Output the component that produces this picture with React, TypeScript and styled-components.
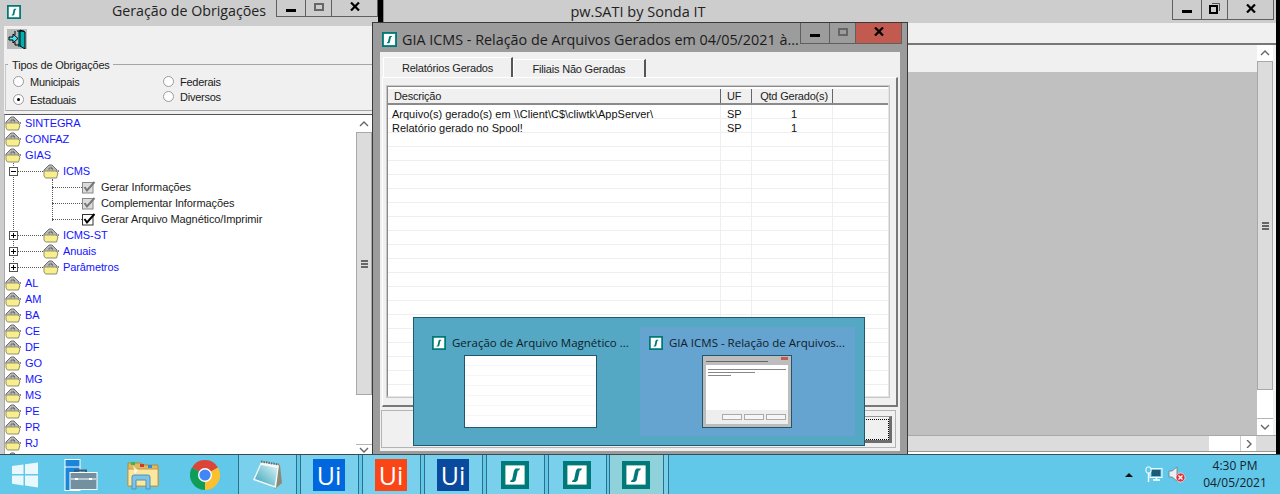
import React from "react";
import styled, { createGlobalStyle } from "styled-components";

const Global = createGlobalStyle`
  html, body { margin: 0; padding: 0; background: #000; overflow: hidden; }
  #root { width: 1280px; height: 494px; }
  * { box-sizing: border-box; }
`;

const uiFont = `"Liberation Sans", Arial, sans-serif`;
const titleFont = `"Open Sans", "Noto Sans", sans-serif`;

const Screen = styled.div`
  width: 1280px; height: 494px; display: flex; flex-direction: column; overflow: hidden;
  font-family: ${uiFont}; font-size: 11px; color: #111;
`;
const Desktop = styled.div`
  position: relative; height: 454px; background: #000; overflow: hidden;
`;
const Win = styled.div<{ $x: number; $w: number }>`
  position: absolute; left: ${p => p.$x}px; top: 0; width: ${p => p.$w}px; height: 454px;
  background: #cdcdcd; display: flex; flex-direction: column;
`;

/* caption buttons */
const Caption = styled.div<{ $top: number; $h: number; $right: number }>`
  position: absolute; right: ${p => p.$right}px; top: ${p => p.$top}px; height: ${p => p.$h}px; display: flex;
  border: 1px solid #5f5f5f; border-top: none;
`;
const CapBtn = styled.div<{ $w: number; $red?: boolean; $sep?: boolean }>`
  width: ${p => p.$w}px; display: flex; align-items: center; justify-content: center;
  background: ${p => (p.$red ? "#c25a50" : "transparent")};
  border-left: ${p => (p.$sep ? "1px solid #5f5f5f" : "none")};
`;
const MinBar = styled.span`display: block; width: 10px; height: 3px; background: #000; margin-top: 4px;`;
const MaxBox = styled.span`display: block; width: 10px; height: 8px; border: 2px solid #666; margin-top: -3px;`;

const CloseX = () => (
  <svg width="10" height="9" viewBox="0 0 10 9" style={{ marginTop: -3 }}>
    <path d="M1 0.5L9 8.5M9 0.5L1 8.5" stroke="#000" strokeWidth="2.2" />
  </svg>
);
const Restore = () => (
  <svg width="11" height="11" viewBox="0 0 11 11" style={{ marginTop: -3 }}>
    <path d="M3 .5H10.5V8" fill="none" stroke="#555" />
    <rect x="1" y="3" width="7" height="7" fill="none" stroke="#000" strokeWidth="2" />
  </svg>
);

const SIcon = ({ size = 14, stroke = 2 }: { size?: number; stroke?: number }) => (
  <svg width={size} height={size} viewBox="0 0 28 28" style={{ flex: "none", display: "block" }}>
    <rect x={stroke * 1.1} y={stroke * 1.1} width={28 - stroke * 2.2} height={28 - stroke * 2.2} fill="#fff" stroke="#007a78" strokeWidth={stroke * 2.2} />
    <path d="M14.5 7.5H19L18 9.5H16.8L14.6 19.5L12.8 21H8.8L10 18.8H11L13 9.5Z" fill="#007a78" />
  </svg>
);

/* left window */
const LeftTitle = styled.div`
  height: 26px; flex: none; display: flex; align-items: center; padding: 0 0 2px 7px; position: relative;
`;
const LeftTitleText = styled.div`
  position: absolute; left: 112px; top: 1px; font: 400 14.2px/20px ${titleFont}; color: #222; white-space: nowrap;
`;
const LeftBody = styled.div`
  flex: 1; min-height: 0; margin-left: 4px; margin-right: 6px; background: #f0f0f0; display: flex; flex-direction: column;
`;
const Toolbar = styled.div`
  height: 34px; flex: none; padding: 3px 0 0 3px;
`;
const ExitBtn = styled.div`
  width: 20px; height: 20px; background: #b9b9b9; display: flex; align-items: center; justify-content: center;
`;
const Group = styled.div`
  margin: 4px 0 0 1px; height: 47px; flex: none; border-top: 1px solid #a5a5a5; border-left: 1px solid #c8c8c8;
  border-bottom: 1px solid #a5a5a5; position: relative; display: grid; grid-template-columns: 150px 1fr;
`;
const GroupLegend = styled.div`
  position: absolute; left: 2px; top: -6px; background: #f0f0f0; padding: 0 3px 0 4px; line-height: 13px; font-size: 11px; letter-spacing: -0.18px; color: #222;
`;
const RadioCol = styled.div<{ $gap: number }>`
  display: flex; flex-direction: column; gap: ${p => p.$gap}px; padding: 10px 0 0 7px;
`;
const RadioRow = styled.div`
  display: flex; align-items: center; gap: 6px; height: 13px; font-size: 11px; letter-spacing: -0.25px; color: #1a1a1a;
`;
const RadioDot = styled.span<{ $on?: boolean }>`
  width: 11px; height: 11px; border-radius: 50%; border: 1px solid #9a9a9a; background: #fff; flex: none;
  display: flex; align-items: center; justify-content: center;
  &::after { content: ""; width: 3px; height: 3px; border-radius: 50%; background: ${p => (p.$on ? "#000" : "transparent")}; }
`;
const TreeBox = styled.div`
  margin-top: 3px; flex: 1; min-height: 0; border-top: 1px solid #555; border-left: 1px solid #a8a8a8; background: #fff; display: flex; position: relative;
`;
const TreeList = styled.div`
  flex: 1; min-width: 0; overflow: hidden; position: relative;
`;
const Row = styled.div<{ $lvl: number }>`
  height: 16px; display: flex; align-items: center; padding-left: ${p => (p.$lvl === 0 ? 0 : p.$lvl === 1 ? 4 : 47)}px;
`;
const Label = styled.span<{ $blue?: boolean; $ml: number }>`
  margin-left: ${p => p.$ml}px; color: ${p => (p.$blue ? "#1414ff" : "#222")}; font-size: 11px; letter-spacing: -0.1px; white-space: nowrap;
`;
const Expander = styled.span`
  width: 9px; height: 9px; border: 1px solid #555; background: #fff; position: relative; flex: none;
  &::before { content: ""; position: absolute; left: 1px; right: 1px; top: 3px; height: 1px; background: #000; }
`;
const ExpanderPlus = styled(Expander)`
  &::after { content: ""; position: absolute; top: 1px; bottom: 1px; left: 3px; width: 1px; background: #000; }
`;
const HDots = styled.span<{ $w: number }>`
  width: ${p => p.$w}px; height: 0; border-top: 1px dotted #555; flex: none;
`;
const VGuide = styled.span<{ $x: number; $y: number; $h: number }>`
  position: absolute; left: ${p => p.$x}px; top: ${p => p.$y}px; height: ${p => p.$h}px; width: 0; border-left: 1px dotted #555;
`;
const VScroll = styled.div`
  width: 16px; flex: none; display: flex; flex-direction: column; background: #fff;
`;
const ArrowBtn = styled.div<{ $h: number }>`
  height: ${p => p.$h}px; flex: none; background: #fff; display: flex; align-items: center; justify-content: center;
`;
const Thumb = styled.div<{ $h: number }>`
  height: ${p => p.$h}px; flex: none; background: #dcdcdc; border: 1px solid #a8a8a8;
  display: flex; align-items: center; justify-content: center;
`;
const Track = styled.div`flex: 1; background: #fff; border-bottom: 1px solid #b5b5b5;`;
const Grip = styled.span`
  width: 7px; height: 8px; background: repeating-linear-gradient(#666 0 2px, transparent 2px 3px);
`;

const Chevron = ({ dir }: { dir: "up" | "down" | "right" }) => {
  const d = dir === "up" ? "M1 6L5 2L9 6" : dir === "down" ? "M1 2L5 6L9 2" : "M3 0L7 4L3 8";
  return (
    <svg width="10" height="8" viewBox="0 0 10 8">
      <path d={d} fill="none" stroke="#666" strokeWidth="1.4" />
    </svg>
  );
};

const Folder = () => (
  <svg width="16" height="15" viewBox="0 0 16 15" style={{ flex: "none" }}>
    <path d="M1 6L6 1H9L14 6V8H1Z" fill="#b8b8b8" stroke="#6d6d6d" strokeWidth="1" />
    <path d="M6.5 4h1M5.5 5h1M8 4h1M9 5h1" stroke="#333" strokeWidth="1" />
    <path d="M1 7H13L15 9L13.5 14H2.5L1 12Z" fill="#f8ee8c" stroke="#8f8f70" strokeWidth="1" />
    <path d="M15 6L16 7L15 8" fill="none" stroke="#888" />
  </svg>
);

const Check = ({ on }: { on?: boolean }) => (
  <svg width="14" height="13" viewBox="0 0 14 13" style={{ flex: "none" }}>
    <rect x=".5" y="1.5" width="10.5" height="10.5" fill={on ? "#fff" : "#dcdcdc"} stroke={on ? "#333" : "#888"} />
    <path d="M2.5 6L5 9.5L12.5 1" fill="none" stroke={on ? "#000" : "#777"} strokeWidth="2" />
  </svg>
);

const ExitIcon = () => (
  <svg width="20" height="20" viewBox="0 0 20 20">
    <rect x="11" y="2" width="7" height="16" fill="#008c8c" />
    <path d="M13 1L18 3V20L13 17Z" fill="#00b0b0" stroke="#000" strokeWidth="1" />
    <path d="M10 2H17" stroke="#000" />
    <path d="M2 8H6V5L11 9.5L6 14V11H2Z" fill="#4fe0f0" stroke="#000" strokeWidth="1" />
    <path d="M8 2V6M8 13V16H12" stroke="#000" fill="none" />
  </svg>
);

type TreeItem = { t: string; l: 0 | 1 | 2; k?: "minus" | "plus"; c?: "gray" | "on" };
const tree: TreeItem[] = [
  { t: "SINTEGRA", l: 0 }, { t: "CONFAZ", l: 0 }, { t: "GIAS", l: 0 },
  { t: "ICMS", l: 1, k: "minus" },
  { t: "Gerar Informações", l: 2, c: "gray" },
  { t: "Complementar Informações", l: 2, c: "gray" },
  { t: "Gerar Arquivo Magnético/Imprimir", l: 2, c: "on" },
  { t: "ICMS-ST", l: 1, k: "plus" }, { t: "Anuais", l: 1, k: "plus" }, { t: "Parâmetros", l: 1, k: "plus" },
  ...["AL", "AM", "BA", "CE", "DF", "GO", "MG", "MS", "PE", "PR", "RJ"].map(t => ({ t, l: 0 as const })),
  { t: "", l: 0 },
];

/* main window */
const MainTitle = styled.div`
  height: 23px; flex: none; text-align: center; font: 400 14.5px/24px ${titleFont}; color: #222; padding-right: 384px; background: #cdcdcd;
  border-left: 1px solid #8a8a8a;
`;
const MenuBand = styled.div`
  height: 20px; flex: none; background: #f0f0f0; border-left: 1px solid #8a8a8a;
`;
const Rule = styled.div`height: 2px; flex: none; background: #777;`;
const MainLower = styled.div`
  flex: 1; min-height: 0; display: flex; background: #f0f0f0; padding-right: 3px;
`;
const MainPane = styled.div`flex: 1; min-width: 0; display: flex; flex-direction: column;`;
const LightBand = styled.div`height: 27px; flex: none; background: #f0f0f0;`;
const GrayArea = styled.div`flex: 1; background: #c0c0c0;`;
const HScrollRow = styled.div`
  height: 19px; flex: none; display: flex; border-top: 1px solid #a8a8a8; background: linear-gradient(#dcdcdc 0 15px, #999 15px 16px, #fff 16px);
`;
const HTrack = styled.div`width: 826px; flex: none;`;
const HThumb = styled.div`width: 31px; flex: none; background: #fff; height: 15px;`;
const HArrow = styled.div`width: 16px; flex: none; background: #fff; border-left: 1px solid #ccc; height: 15px; display: flex; align-items: center; justify-content: center;`;

/* dialog */
const DialogFrame = styled.div`
  position: absolute; left: 372px; top: 22px; width: 536px; height: 432px; background: #9c9c9c;
  border: 1px solid #3a3a3a; border-bottom: none; padding: 0 7px 3px 7px; display: flex; flex-direction: column;
`;
const DialogTitle = styled.div`
  height: 29px; flex: none; display: flex; align-items: center; gap: 5px; padding: 4px 0 0 2px;
  font: 400 14.37px/20px ${titleFont}; color: #1b1b1b; white-space: nowrap;
`;
const DialogClient = styled.div`
  flex: 1; min-height: 0; background: #f0f0f0; padding: 5px 2px 3px 2px; display: flex; flex-direction: column;
`;
const Tabs = styled.div`display: flex; align-items: flex-end; height: 20px; flex: none; padding-left: 1px;`;
const Tab = styled.div<{ $on?: boolean; $w: number }>`
  width: ${p => p.$w}px; height: ${p => (p.$on ? 20 : 18)}px; display: flex; align-items: center; justify-content: center;
  background: #f0f0f0; border-top: 1px solid #fff; border-left: 1px solid #fff; border-right: 2px solid #555;
  font-size: 11px; letter-spacing: -0.2px; color: #222; padding-top: ${p => (p.$on ? 0 : 1)}px;
`;
const TabPage = styled.div`
  height: 330px; flex: none; border-top: 1px solid #fff; border-left: 1px solid #fff; border-right: 2px solid #777; border-bottom: 2px solid #777;
  padding: 7px 6px 7px 3px; display: flex;
`;
const ListOuter = styled.div`
  flex: 1; border: 2px solid #8a8a8a; border-right-color: #e4e4e4; border-bottom-color: #e4e4e4; background: #fff; padding-top: 1px; display: flex; flex-direction: column;
  outline: 1px solid #c8c8c8; outline-offset: -1px;
`;
const ListHead = styled.div`
  height: 17px; flex: none; display: grid; grid-template-columns: 333px 31px 81px 1fr; background: #f0f0f0; border-top: 1px solid #fff; border-bottom: 2px solid #8a8a8a;
`;
const HeadCell = styled.div<{ $center?: boolean; $pad?: number }>`
  border-right: 1px solid #666; padding-left: ${p => p.$pad ?? 0}px; line-height: 14px; font-size: 11px; letter-spacing: -0.2px; color: #222; text-align: ${p => (p.$center ? "center" : "left")}; white-space: nowrap;
`;
const ListBody = styled.div`flex: 1; min-height: 0; overflow: hidden;`;
const ListRow = styled.div`
  height: 14px; display: grid; grid-template-columns: 333px 31px 81px 1fr; grid-template-rows: 13px; border-bottom: 1px solid #efefef;
`;
const Cell = styled.div<{ $center?: boolean; $pad?: number }>`
  border-right: 1px solid #efefef; padding-left: ${p => p.$pad ?? 0}px; line-height: 18px; font-size: 11px; color: #111; text-align: ${p => (p.$center ? "center" : "left")}; white-space: nowrap;
`;
const DialogFooter = styled.div`
  flex: 1; margin: 3px 2px 0 -1px; border: 1px solid #b4b4b4; display: flex; align-items: center; justify-content: flex-end; padding: 0 3px 0 0;
`;
const FocusBtn = styled.div`
  width: 90px; height: 27px; background: #f0f0f0; border: 1px solid #999; border-right: 3px solid #6d6d6d; border-bottom: 3px solid #6d6d6d; padding: 2px;
  &::after { content: ""; display: block; width: 100%; height: 100%; border: 1px dotted #000; }
`;

/* switcher */
const Switcher = styled.div`
  position: absolute; left: 413px; top: 317px; width: 452px; height: 129px; background: #54a8c4; border: 1px solid #1f5a70;
  padding: 9px; display: grid; grid-template-columns: 217px 215px;
`;
const SwitchCard = styled.div<{ $on?: boolean }>`
  background: ${p => (p.$on ? "#65a3d0" : "transparent")}; padding: 9px 0 0 9px; display: flex; flex-direction: column;
`;
const SwitchHead = styled.div`
  display: flex; align-items: center; gap: 6px; height: 14px; font: 400 11.5px/14px ${titleFont}; color: #10202a; white-space: nowrap;
`;
const ThumbFrame = styled.div<{ $w: number; $ml: number }>`
  width: ${p => p.$w}px; height: 73px; margin: 5px 0 0 ${p => p.$ml}px; border: 1px solid #23566c;
  background: repeating-linear-gradient(#fff 0 9px, #f6f6f6 9px 10px);
`;
const MiniWin = styled.div`
  width: 100%; height: 100%; background: #bdbdbd; padding: 5px 3px 3px; display: flex; flex-direction: column; position: relative;
`;
const MiniClose = styled.span`position: absolute; right: 3px; top: 1px; width: 7px; height: 3px; background: #c25a50;`;
const MiniBar = styled.div`height: 1px; background: #666; margin-bottom: 3px; width: 76%;`;
const MiniBody = styled.div`flex: 1; background: #fff; padding: 4px 2px;`;
const MiniLine = styled.div<{ $w: number }>`height: 1px; width: ${p => p.$w}%; background: #888; margin-bottom: 2px;`;
const MiniFoot = styled.div`height: 14px; background: #eee; display: flex; justify-content: flex-end; align-items: center; gap: 2px; padding-right: 2px;`;
const MiniBtn = styled.div`width: 20px; height: 6px; border: 1px solid #aaa; background: #f6f6f6;`;

/* taskbar */
const Taskbar = styled.div`
  height: 40px; flex: none; background: #62c8ea; border-top: 1px solid #3f4a50; display: flex; align-items: center;
`;
const StartSlot = styled.div`width: 50px; height: 100%; flex: none; display: flex; align-items: center; justify-content: center;`;
const Slot = styled.div<{ $open?: boolean; $active?: boolean }>`
  width: 62px; height: 100%; flex: none; display: flex; align-items: center; justify-content: center; position: relative;
  ${p => p.$open && `
    background: linear-gradient(90deg,#62c8ea 0 2px,#2c6f8a 2px 3px,#78d0ec 3px 60px,#2c6f8a 60px 61px,#62c8ea 61px);
  `}
  ${p => p.$active && `
    background: linear-gradient(90deg,#62c8ea 0 1px,#2c6f8a 1px 2px,#8fd2dc 2px 55px,#2c6f8a 55px 56px,#78d0ec 56px 60px,#2c6f8a 60px 61px,#62c8ea 61px);
    padding-right: 6px;
  `}
`;
const UiTile = styled.div<{ $c: string }>`
  width: 32px; height: 32px; background: ${p => p.$c}; color: #fff; font: 400 25px/32px "Open Sans", sans-serif; text-align: center;
`;
const Tray = styled.div`
  margin-left: auto; display: flex; align-items: center; height: 100%;
`;
const Clock = styled.div`
  width: 78px; font: 400 12px/17px ${titleFont}; color: #12222a; padding: 0 12px 2px 0; margin-left: 16px; white-space: nowrap; display: flex; flex-direction: column; align-items: center;
`;
const TrayIcons = styled.div`display: flex; align-items: center; gap: 5px;`;

const WinLogo = () => (
  <svg width="28" height="28" viewBox="0 0 28 28">
    <path d="M1 5L12.5 3.4V13H1ZM14 3.2L27 1.4V13H14ZM1 14.5H12.5V24.4L1 22.8ZM14 14.5H27V26.4L14 24.6Z" fill="#e8f8fc" />
  </svg>
);
const ServerMgr = () => (
  <svg width="34" height="32" viewBox="0 0 34 32">
    <rect x="1" y="0.5" width="15" height="31" fill="#1a86d8" stroke="#fff" />
    <path d="M1 8H16" stroke="#fff" />
    <path d="M11 14V11.5H22V14" fill="none" stroke="#3d5a70" strokeWidth="2" />
    <rect x="6" y="13.5" width="27" height="17" fill="#72909f" stroke="#fff" />
    <path d="M7 20H32" stroke="#fff" />
    <rect x="11" y="19" width="3" height="2" fill="#fff" /><rect x="25" y="19" width="3" height="2" fill="#fff" />
  </svg>
);
const Explorer = () => (
  <svg width="32" height="30" viewBox="0 0 32 30">
    <path d="M1 3H14L16 5H31V26H1Z" fill="#e0b860" stroke="#b08a3a" />
    <rect x="4" y="2" width="4" height="3" fill="#3cb54a" />
    <rect x="13" y="4" width="4" height="3" fill="#d13a2a" />
    <rect x="21" y="5" width="4" height="3" fill="#2a90d8" />
    <path d="M1 9H31V26H1Z" fill="#fbe7a0" stroke="#c09a4a" />
    <path d="M5 29V17Q5 15 7 15H21Q23 15 23 17V29H19V20H9V29Z" fill="#7fc4e4" stroke="#4a94b8" />
    <path d="M6 6L8 14L11 10Z" fill="#fff" opacity=".7" />
  </svg>
);
const Chrome = () => (
  <svg width="30" height="30" viewBox="0 0 30 30">
    <path d="M15 15L2 7.5A15 15 0 0 1 28 7.5Z" fill="#db4437" />
    <path d="M15 15L28 7.5A15 15 0 0 1 15 30Z" fill="#fbc02d" />
    <path d="M15 15L15 30A15 15 0 0 1 2 7.5Z" fill="#0f9d58" />
    <circle cx="15" cy="15" r="7" fill="#fff" />
    <circle cx="15" cy="15" r="5.6" fill="#4285f4" />
  </svg>
);
const Notepad = () => (
  <svg width="32" height="30" viewBox="0 0 32 30">
    <defs>
      <linearGradient id="npad" x1="0" y1="1" x2="1" y2="0">
        <stop offset="0" stopColor="#3f9fb8" />
        <stop offset=".55" stopColor="#8fd0dc" />
        <stop offset="1" stopColor="#dff3f6" />
      </linearGradient>
    </defs>
    <path d="M10 2L29 5L31 23L24 29Z" fill="#8a8a78" />
    <path d="M10 2L28 5L25 28L2 20Z" fill="#f4f8f8" />
    <path d="M10 5L26.5 8L23.5 26L4 19Z" fill="url(#npad)" />
    <path d="M10 1.5L28 4.5" stroke="#6a6a6a" strokeWidth="2" strokeDasharray="1.5 1" />
  </svg>
);
const NetIcon = () => (
  <svg width="18" height="17" viewBox="0 0 18 17">
    <rect x="5" y="2.5" width="12" height="9" fill="none" stroke="#fff" strokeWidth="1" />
    <rect x="6.5" y="4" width="9" height="6" fill="#1d5a78" />
    <path d="M8 14H15M11.5 12V14" stroke="#fff" strokeWidth="1.4" />
    <rect x="1" y="1" width="5" height="6" rx="2" fill="#62c8ea" stroke="#fff" />
    <path d="M3.5 7V16" stroke="#fff" strokeWidth="1.4" />
  </svg>
);
const SpeakerOff = () => (
  <svg width="18" height="17" viewBox="0 0 18 17">
    <path d="M1 5H4L9 1V15L4 11H1Z" fill="#e8eef2" stroke="#6a7a84" strokeWidth=".8" />
    <circle cx="12.5" cy="11.5" r="4.5" fill="#e0303a" stroke="#fff" strokeWidth=".6" />
    <path d="M10.5 9.5L14.5 13.5M14.5 9.5L10.5 13.5" stroke="#fff" strokeWidth="1.3" />
  </svg>
);

const TriangleUp = styled.span`
  width: 0; height: 0; border-left: 4px solid transparent; border-right: 4px solid transparent; border-bottom: 4px solid #111; margin-right: 12px;
`;

const rows = Array.from({ length: 22 });

export default function App() {
  return (
    <Screen>
      <Global />
      <Desktop>
        <Win $x={0} $w={378}>
          <LeftTitle>
            <SIcon size={14} stroke={1.6} />
            <LeftTitleText>Geração de Obrigações</LeftTitleText>
            <Caption $top={0} $h={17} $right={0}>
              <CapBtn $w={28}><MinBar /></CapBtn>
              <CapBtn $w={26} $sep><MaxBox /></CapBtn>
              <CapBtn $w={46} $sep><CloseX /></CapBtn>
            </Caption>
          </LeftTitle>
          <LeftBody>
            <Toolbar><ExitBtn><ExitIcon /></ExitBtn></Toolbar>
            <Group>
              <GroupLegend>Tipos de Obrigações</GroupLegend>
              <RadioCol $gap={5}>
                <RadioRow><RadioDot />Municipais</RadioRow>
                <RadioRow><RadioDot $on />Estaduais</RadioRow>
              </RadioCol>
              <RadioCol $gap={2}>
                <RadioRow><RadioDot />Federais</RadioRow>
                <RadioRow><RadioDot />Diversos</RadioRow>
              </RadioCol>
            </Group>
            <TreeBox>
              <TreeList>
                <VGuide $x={8} $y={48} $h={107} />
                <VGuide $x={47} $y={64} $h={42} />
                {tree.map((it, i) => (
                  <Row key={i} $lvl={it.l}>
                    {it.k === "minus" && <><Expander /><HDots $w={25} /></>}
                    {it.k === "plus" && <><ExpanderPlus /><HDots $w={25} /></>}
                    {it.l === 2 && <HDots $w={30} />}
                    {it.l !== 2 && <Folder />}
                    {it.c && <Check on={it.c === "on"} />}
                    {it.t && <Label $blue={it.l !== 2} $ml={it.l === 2 ? 5 : 4}>{it.t}</Label>}
                  </Row>
                ))}
              </TreeList>
              <VScroll>
                <ArrowBtn $h={17}><Chevron dir="up" /></ArrowBtn>
                <Thumb $h={263}><Grip /></Thumb>
                <Track />
                <ArrowBtn $h={9}><Chevron dir="down" /></ArrowBtn>
              </VScroll>
            </TreeBox>
          </LeftBody>
        </Win>

        <Win $x={383} $w={893}>
          <MainTitle>pw.SATI by Sonda IT</MainTitle>
          <Caption $top={0} $h={20} $right={2}>
            <CapBtn $w={28}><MinBar /></CapBtn>
            <CapBtn $w={26} $sep><Restore /></CapBtn>
            <CapBtn $w={46} $sep><CloseX /></CapBtn>
          </Caption>
          <MenuBand />
          <Rule />
          <MainLower>
            <MainPane>
              <LightBand />
              <GrayArea />
            </MainPane>
            <VScroll>
              <ArrowBtn $h={16}><Chevron dir="up" /></ArrowBtn>
              <Thumb $h={329}><Grip /></Thumb>
              <Track />
              <ArrowBtn $h={16}><Chevron dir="down" /></ArrowBtn>
            </VScroll>
          </MainLower>
          <HScrollRow>
            <HTrack />
            <HThumb />
            <HArrow><Chevron dir="right" /></HArrow>
          </HScrollRow>
        </Win>

        <DialogFrame>
          <DialogTitle>
            <SIcon size={15} stroke={1.6} />
            <span>GIA ICMS - Relação de Arquivos Gerados em 04/05/2021 à...</span>
          </DialogTitle>
          <Caption $top={0} $h={21} $right={5}>
            <CapBtn $w={28}><MinBar /></CapBtn>
            <CapBtn $w={26} $sep><MaxBox /></CapBtn>
            <CapBtn $w={46} $sep $red><CloseX /></CapBtn>
          </Caption>
          <DialogClient>
            <Tabs>
              <Tab $on $w={130}>Relatórios Gerados</Tab>
              <Tab $w={133}>Filiais Não Geradas</Tab>
            </Tabs>
            <TabPage>
              <ListOuter>
                <ListHead>
                  <HeadCell $pad={6}>Descrição</HeadCell>
                  <HeadCell $pad={6}>UF</HeadCell>
                  <HeadCell $center $pad={4}>Qtd Gerado(s)</HeadCell>
                  <span />
                </ListHead>
                <ListBody>
                  <ListRow>
                    <Cell $pad={4}>Arquivo(s) gerado(s) em \\Client\C$\cliwtk\AppServer\</Cell>
                    <Cell $pad={6}>SP</Cell>
                    <Cell $center $pad={4}>1</Cell>
                    <span />
                  </ListRow>
                  <ListRow>
                    <Cell $pad={4}>Relatório gerado no Spool!</Cell>
                    <Cell $pad={6}>SP</Cell>
                    <Cell $center $pad={4}>1</Cell>
                    <span />
                  </ListRow>
                  {rows.map((_, i) => (
                    <ListRow key={i}><Cell /><Cell /><Cell /><span /></ListRow>
                  ))}
                </ListBody>
              </ListOuter>
            </TabPage>
            <DialogFooter><FocusBtn /></DialogFooter>
          </DialogClient>
        </DialogFrame>

        <Switcher>
          <SwitchCard>
            <SwitchHead><SIcon size={14} stroke={1.6} />Geração de Arquivo Magnético ...</SwitchHead>
            <ThumbFrame $w={133} $ml={32} />
          </SwitchCard>
          <SwitchCard $on>
            <SwitchHead><SIcon size={14} stroke={1.6} />GIA ICMS - Relação de Arquivos...</SwitchHead>
            <ThumbFrame $w={90} $ml={53}>
              <MiniWin>
                <MiniClose />
                <MiniBar />
                <MiniBody>
                  <MiniLine $w={100} /><MiniLine $w={60} /><MiniLine $w={30} />
                </MiniBody>
                <MiniFoot><MiniBtn /><MiniBtn /><MiniBtn /></MiniFoot>
              </MiniWin>
            </ThumbFrame>
          </SwitchCard>
        </Switcher>
      </Desktop>

      <Taskbar>
        <StartSlot><WinLogo /></StartSlot>
        <Slot><ServerMgr /></Slot>
        <Slot><Explorer /></Slot>
        <Slot><Chrome /></Slot>
        <Slot $open><Notepad /></Slot>
        <Slot $open><UiTile $c="#0067df">Ui</UiTile></Slot>
        <Slot $open><UiTile $c="#fa4616">Ui</UiTile></Slot>
        <Slot $open><UiTile $c="#0a4a9e">Ui</UiTile></Slot>
        <Slot $open><SIcon size={28} /></Slot>
        <Slot $open><SIcon size={28} /></Slot>
        <Slot $active><SIcon size={28} /></Slot>
        <Tray>
          <TriangleUp />
          <TrayIcons><NetIcon /><SpeakerOff /></TrayIcons>
          <Clock><span>4:30 PM</span><span>04/05/2021</span></Clock>
        </Tray>
      </Taskbar>
    </Screen>
  );
}
